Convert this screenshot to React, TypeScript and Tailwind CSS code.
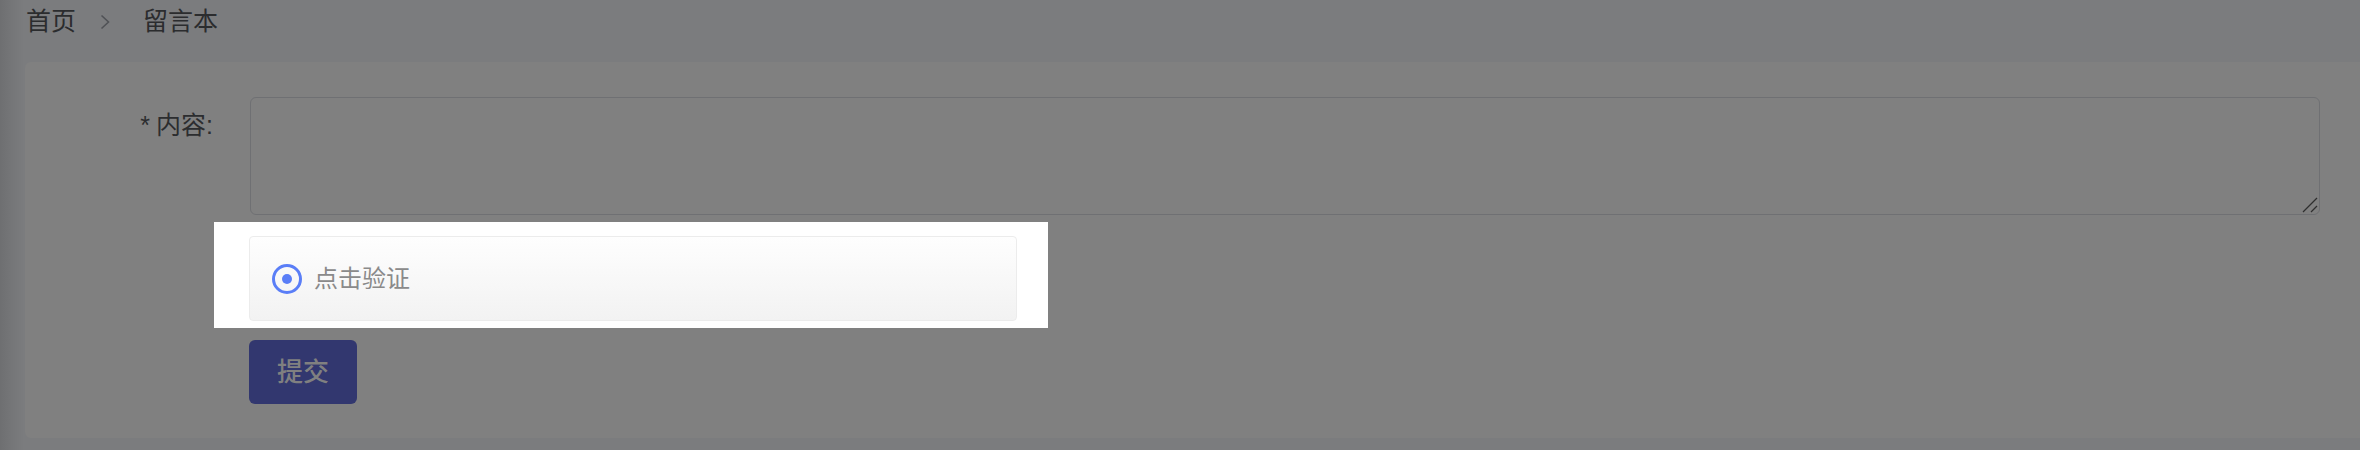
import React from "react";

const font = "font-['Liberation_Sans','Noto_Sans_CJK_SC',sans-serif]";

function Breadcrumb() {
  return (
    <div className="flex h-[44px] items-center pl-[26px] text-[25px] text-[#2b2c2e]">
      <span>首页</span>
      <svg
        className="ml-[23px] mr-[32px] h-[16px] w-[12px]"
        viewBox="0 0 12 16"
        fill="none"
        stroke="#505256"
        strokeWidth="1.6"
      >
        <polyline points="2.5,1.5 9.5,8 2.5,14.5" />
      </svg>
      <span>留言本</span>
    </div>
  );
}

function Captcha() {
  return (
    <div className="ml-[189px] mt-[7px] h-[106px] w-[834px] bg-white pl-[35px] pt-[14px]">
      <div className="flex h-[85px] w-[768px] items-center rounded-[4px] border border-[#ececec] bg-[linear-gradient(180deg,#fefefe,#f2f2f2)] pl-[22px]">
        <span className="flex h-[30px] w-[30px] items-center justify-center rounded-full border-[3px] border-[#5a7ef7]">
          <span className="h-[10px] w-[10px] rounded-full bg-[#5a7ef7]" />
        </span>
        <span className="ml-[12px] text-[24px] leading-none text-[#8a8a8a]">
          点击验证
        </span>
      </div>
    </div>
  );
}

export default function App() {
  return (
    <div
      className={`${font} h-[450px] w-[2360px] overflow-hidden bg-[linear-gradient(90deg,#6e6f71_0px,#747577_10px,#7b7c7e_24px)]`}
    >
      <Breadcrumb />
      <div className="ml-[25px] mt-[18px] h-[376px] rounded-l-[6px] bg-[#808080] pt-[35px]">
        <div className="flex">
          <label className="w-[225px] pr-[37px] text-right text-[25px] leading-[56px] text-[#2c2d2f]">
            <span className="mr-[6px]">*</span>内容:
          </label>
          <div className="relative mr-[40px] flex-1">
            <textarea className="block h-[118px] w-full resize-none rounded-[6px] border border-[#6f7073] bg-transparent outline-none" />
            {/* resize grip */}
            <svg
              className="absolute bottom-[2px] right-[2px] h-[16px] w-[16px]"
              viewBox="0 0 16 16"
              stroke="#2e2e2e"
              strokeWidth="1.3"
            >
              <line x1="1" y1="15" x2="15" y2="1" />
              <line x1="9" y1="15" x2="15" y2="9" />
            </svg>
          </div>
        </div>
        <Captcha />
        <button className="ml-[224px] mt-[12px] h-[64px] w-[108px] rounded-[6px] bg-[#32376f] text-[26px] font-medium text-[#808080]">
          提交
        </button>
      </div>
    </div>
  );
}
